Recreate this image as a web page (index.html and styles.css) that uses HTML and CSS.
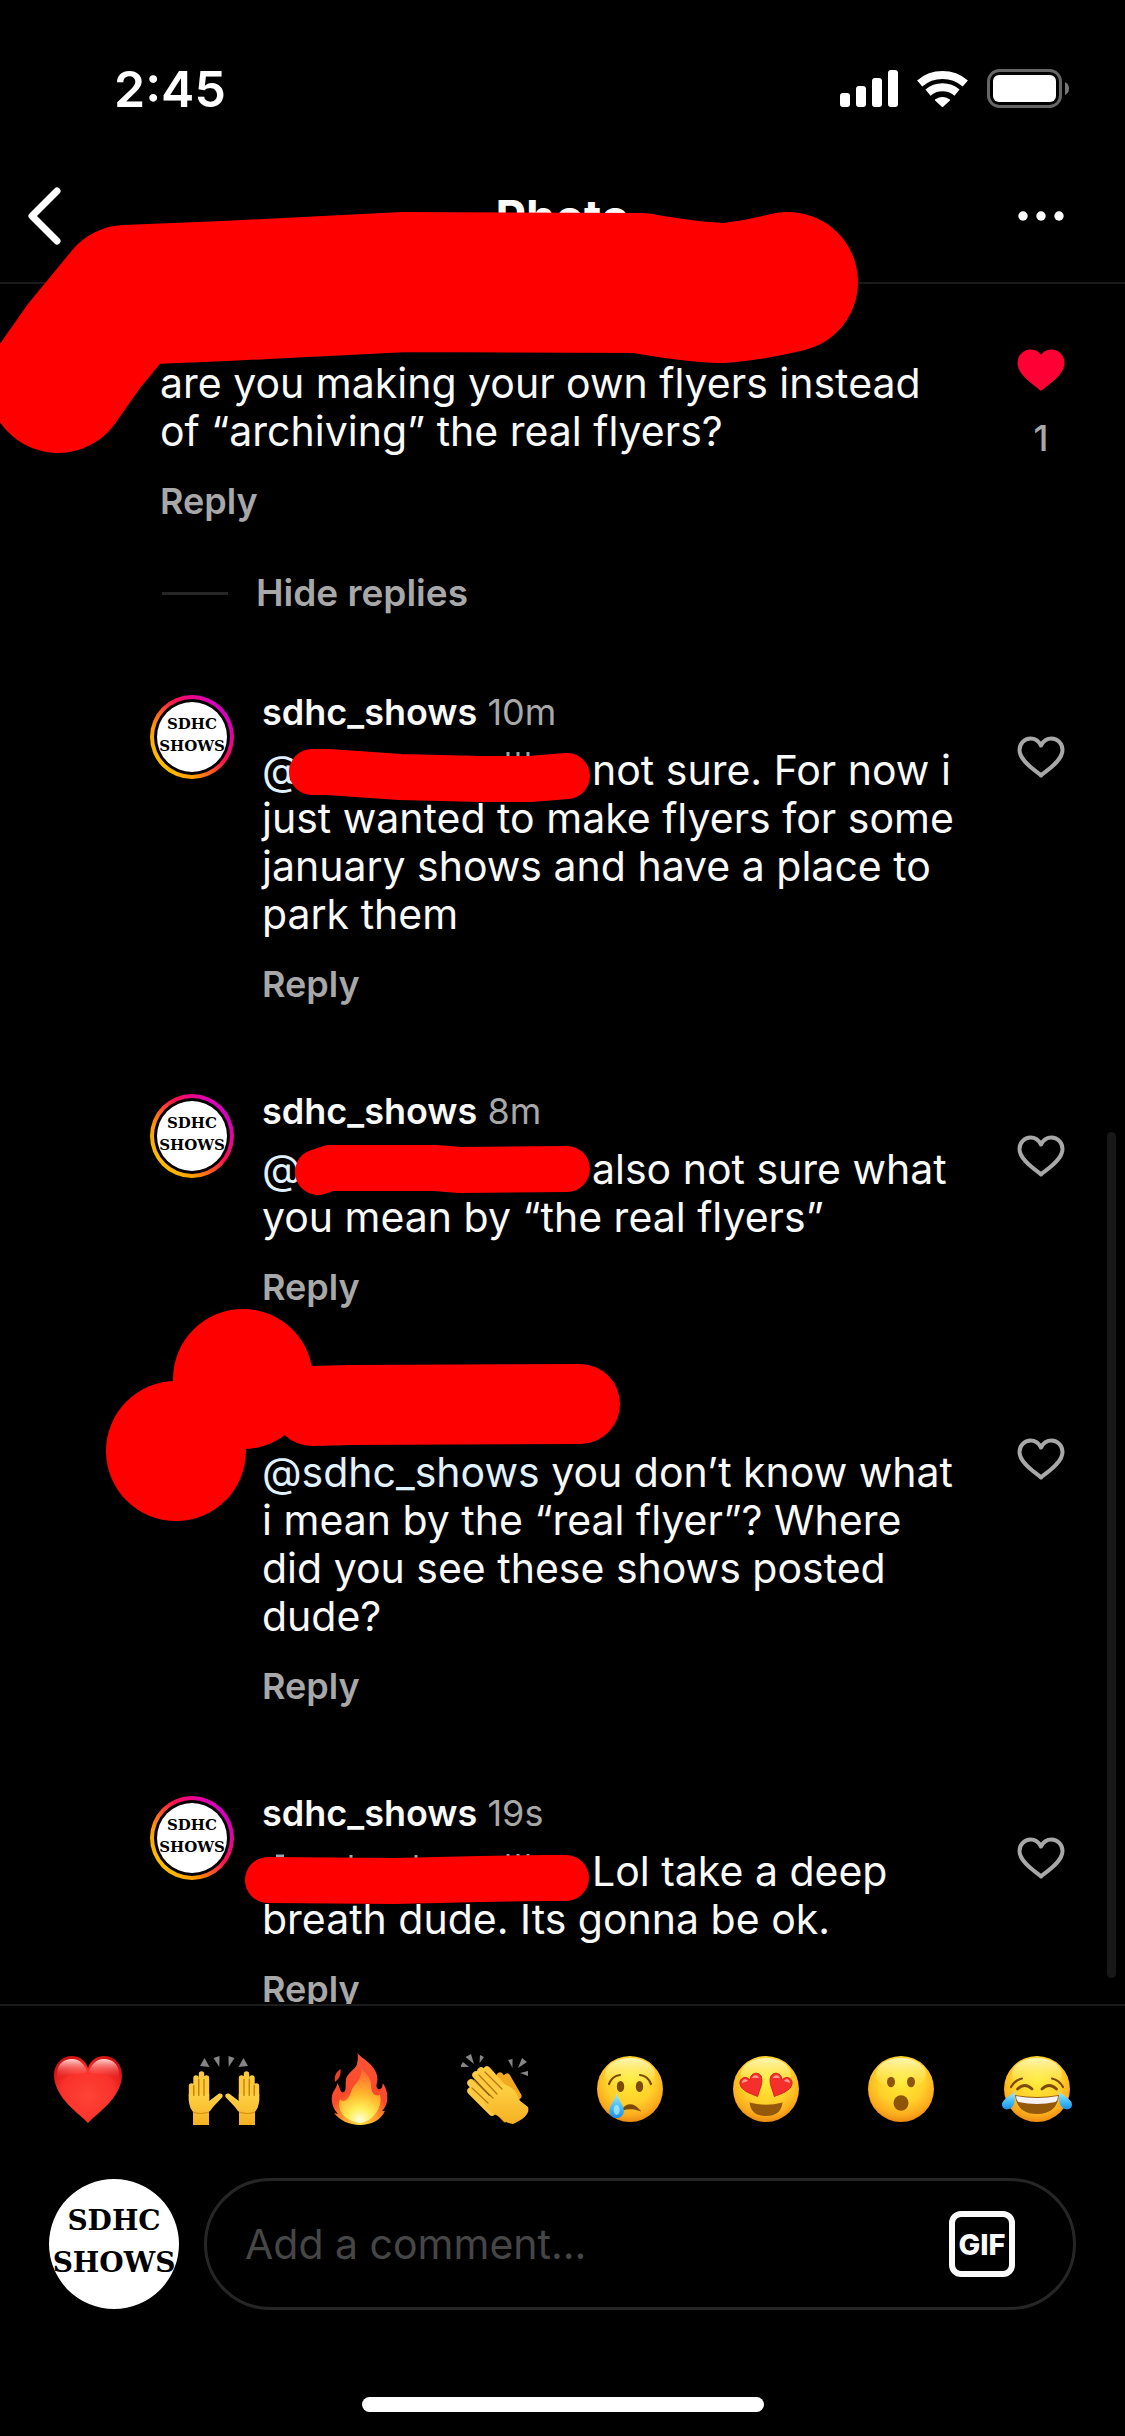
FILE: index.html
```html
<!DOCTYPE html>
<html lang="en">
<head>
    <meta charset="UTF-8">
    <meta name="viewport" content="width=device-width, initial-scale=1.0">
    <title>Photo</title>
    <link rel="stylesheet" href="styles.css">
</head>
<body>

    <!-- shapes shared by several icons -->
    <svg class="defs" aria-hidden="true">
        <defs>
            <radialGradient id="face" cx="50%" cy="36%" r="66%">
                <stop offset="0" stop-color="#ffec35"/>
                <stop offset=".55" stop-color="#ffd02a"/>
                <stop offset=".82" stop-color="#fbab1c"/>
                <stop offset="1" stop-color="#e88410"/>
            </radialGradient>
            <linearGradient id="shine" x1="0" y1="0" x2="0" y2="1">
                <stop offset="0" stop-color="#fff9c4" stop-opacity=".9"/>
                <stop offset="1" stop-color="#fff04a" stop-opacity="0"/>
            </linearGradient>
            <linearGradient id="skin" x1="0" y1="0" x2="0" y2="1">
                <stop offset="0" stop-color="#ffd246"/>
                <stop offset="1" stop-color="#f5b023"/>
            </linearGradient>
            <radialGradient id="red" cx="50%" cy="60%" r="65%">
                <stop offset="0" stop-color="#ff4235"/>
                <stop offset=".6" stop-color="#f9322b"/>
                <stop offset="1" stop-color="#cf0f14"/>
            </radialGradient>
            <linearGradient id="gloss" x1="0" y1="0" x2="0" y2="1">
                <stop offset="0" stop-color="#ffd9d6"/>
                <stop offset="1" stop-color="#ff4a40" stop-opacity="0"/>
            </linearGradient>
            <linearGradient id="tear" x1="0" y1="0" x2="0" y2="1">
                <stop offset="0" stop-color="#a8ecff"/>
                <stop offset=".6" stop-color="#3fb9f7"/>
                <stop offset="1" stop-color="#1a8fe6"/>
            </linearGradient>
            <radialGradient id="flame" gradientUnits="userSpaceOnUse" cx="40" cy="70" r="66">
                <stop offset="0" stop-color="#fffde0"/>
                <stop offset=".18" stop-color="#ffee58"/>
                <stop offset=".4" stop-color="#ffb62c"/>
                <stop offset=".65" stop-color="#ff7a30"/>
                <stop offset="1" stop-color="#f4402a"/>
            </radialGradient>
            <radialGradient id="flame-edge" gradientUnits="userSpaceOnUse" cx="40" cy="74" r="60">
                <stop offset="0" stop-color="#ffe14a"/>
                <stop offset=".3" stop-color="#ff9a2b"/>
                <stop offset=".55" stop-color="#f9492b"/>
                <stop offset="1" stop-color="#fb5134"/>
            </radialGradient>
        </defs>
        <symbol id="heart" viewBox="0 0 48 42">
            <path d="M24 39.500C20 35.500 2.500 25.500 2.500 14C2.500 7.500 7.500 2.500 13.500 2.500C18.500 2.500 22 5.500 24 9.500C26 5.500 29.500 2.500 34.500 2.500C40.500 2.500 45.500 7.500 45.500 14C45.500 25.500 28 35.500 24 39.500Z" stroke-width="4" stroke-linejoin="round"/>
        </symbol>
        <symbol id="face-base" viewBox="0 0 78 78">
            <circle cx="39" cy="39" r="33" fill="url(#face)"/>
            <ellipse cx="39" cy="24" rx="25" ry="16" fill="url(#shine)"/>
        </symbol>
    </svg>

    <header class="top">
        <div class="status-bar">
            <span class="time">2:45</span>
            <div class="status-icons">
                <svg width="58" height="37" viewBox="0 0 58 37" fill="#fff" aria-hidden="true">
                    <rect x="0" y="23" width="10" height="14" rx="3"/>
                    <rect x="16" y="16" width="10" height="21" rx="3"/>
                    <rect x="32" y="8" width="10" height="29" rx="3"/>
                    <rect x="48" y="0" width="10" height="37" rx="3"/>
                </svg>
                <svg width="51" height="37" viewBox="0 0 51 37" fill="none" stroke="#fff" stroke-width="8" aria-hidden="true">
                    <path d="M2.700 13.500A35 35 0 0 1 48.300 13.500"/>
                    <path d="M11 22.600A22.500 22.500 0 0 1 40 22.600"/>
                    <path d="M19 30A12 12 0 0 1 32 30L25.500 36Z" fill="#fff" stroke-width="2" stroke-linejoin="round"/>
                </svg>
                <svg width="82" height="39" viewBox="0 0 82 39" aria-hidden="true">
                    <rect x="1.500" y="1.500" width="72" height="36" rx="11" fill="none" stroke="#666" stroke-width="3"/>
                    <rect x="6" y="6" width="63" height="27" rx="6" fill="#fff"/>
                    <path d="M78 13Q82 15 82 19.500Q82 24 78 26Z" fill="#777"/>
                </svg>
            </div>
        </div>
        <nav class="nav-bar">
            <button class="nav-button" aria-label="Back">
                <svg width="34" height="58" viewBox="0 0 34 58" fill="none" stroke="#fff" stroke-width="7" stroke-linecap="round" stroke-linejoin="round">
                    <path d="M29 4L4 29L29 54"/>
                </svg>
            </button>
            <h1 class="title">Photo</h1>
            <button class="nav-button more" aria-label="More options">
                <svg width="46" height="10" viewBox="0 0 46 10" fill="#fff">
                    <circle cx="5" cy="5" r="4.700"/>
                    <circle cx="23" cy="5" r="4.700"/>
                    <circle cx="41" cy="5" r="4.700"/>
                </svg>
            </button>
        </nav>
        <svg class="scribble wide" width="860" height="460" aria-hidden="true">
            <path d="M58 383L84 346L126 295L225 291L405 282L640 283Q690 292 722 293Q745 292 788 282"/>
        </svg>
    </header>

    <main class="comments">
        <article class="comment">
            <div class="comment-body">
                <div class="comment-head"></div>
                <p class="comment-text">are you making your own flyers instead of “archiving” the real flyers?</p>
                <button class="reply-button">Reply</button>
            </div>
            <div class="likes">
                <button class="like-button liked" aria-label="Unlike"><svg class="heart"><use href="#heart"/></svg></button>
                <span class="like-count">1</span>
            </div>
        </article>

        <button class="hide-replies">Hide replies</button>

        <article class="comment reply">
            <div class="avatar-ring"><div class="avatar"><span>SDHC</span><span>SHOWS</span></div></div>
            <div class="comment-body">
                <div class="comment-head"><a href="#" class="username">sdhc_shows</a> <span class="age">10m</span></div>
                <p class="comment-text"><a href="#" class="mention covered">@</a>not sure. For now i just wanted to make flyers for some january shows and have a place to park them</p>
                <button class="reply-button">Reply</button>
            </div>
            <div class="likes">
                <button class="like-button" aria-label="Like"><svg class="heart"><use href="#heart"/></svg></button>
            </div>
            <svg class="scribble" width="600" height="130" aria-hidden="true">
                <path class="letter-tops" d="M508 64V70M518 64V70M528 64V70"/>
                <path d="M312 84L328 84L400 89L480 91L530 91L567 88"/>
            </svg>
        </article>

        <article class="comment reply">
            <div class="avatar-ring"><div class="avatar"><span>SDHC</span><span>SHOWS</span></div></div>
            <div class="comment-body">
                <div class="comment-head"><a href="#" class="username">sdhc_shows</a> <span class="age">8m</span></div>
                <p class="comment-text"><a href="#" class="mention covered">@</a>also not sure what you mean by “the real flyers”</p>
                <button class="reply-button">Reply</button>
            </div>
            <div class="likes">
                <button class="like-button" aria-label="Like"><svg class="heart"><use href="#heart"/></svg></button>
            </div>
            <svg class="scribble" width="600" height="130" aria-hidden="true">
                <path d="M318 85L330 81L435 81L460 83L567 82"/>
            </svg>
        </article>

        <article class="comment reply">
            <div class="avatar-ring empty"></div>
            <div class="comment-body">
                <div class="comment-head"></div>
                <p class="comment-text"><a href="#" class="mention">@sdhc_shows</a> you don’t know what i mean by the “real flyer”? Where did you see these shows posted dude?</p>
                <button class="reply-button">Reply</button>
            </div>
            <div class="likes">
                <button class="like-button" aria-label="Like"><svg class="heart"><use href="#heart"/></svg></button>
            </div>
            <svg class="scribble" width="640" height="140" aria-hidden="true">
                <path class="medium" d="M312 16L350 15L580 14"/>
                <circle cx="176" cy="61" r="70"/>
                <circle cx="243" cy="-11" r="70"/>
            </svg>
        </article>

        <article class="comment reply">
            <div class="avatar-ring"><div class="avatar"><span>SDHC</span><span>SHOWS</span></div></div>
            <div class="comment-body">
                <div class="comment-head"><a href="#" class="username">sdhc_shows</a> <span class="age">19s</span></div>
                <p class="comment-text"><a href="#" class="mention covered"></a>Lol take a deep breath dude. Its gonna be ok.</p>
                <button class="reply-button">Reply</button>
            </div>
            <div class="likes">
                <button class="like-button" aria-label="Like"><svg class="heart"><use href="#heart"/></svg></button>
            </div>
            <svg class="scribble" width="600" height="130" aria-hidden="true">
                <path class="letter-tops" d="M276 67H284M351 66V70M416 66V70M508 65V70M518 65V70M528 65V70"/>
                <path d="M268 91L395 92L480 90L545 89L566 89"/>
            </svg>
        </article>
        <div class="scroll-thumb"></div>
    </main>

    <footer class="composer">
        <div class="emoji-row">
            <button class="emoji" aria-label="Red heart">
                <svg viewBox="0 0 78 78">
                    <path d="M39 73C32 65 5 48 5 25C5 14 13 6 23 6C31 6 37 11 39 18C41 11 47 6 55 6C65 6 73 14 73 25C73 48 46 65 39 73Z" fill="url(#red)"/>
                    <path d="M8 24C8 14 15 9 23 9C31 9 36 15 38 22C30 26 18 22 8 28ZM40 22C42 15 47 9 55 9C63 9 70 14 70 24V28C60 22 48 26 40 22Z" fill="url(#gloss)"/>
                </svg>
            </button>
            <button class="emoji" aria-label="Raising hands">
                <svg viewBox="0 0 78 78">
                    <g id="raised-hand">
                        <path d="M15 16L19.500 8L24.500 17ZM28.500 8L34.500 6L34.300 17Z" fill="#858585"/>
                        <path d="M6.500 36V50M11 28V48M16.500 24V48M21.500 28V50" stroke="#ffc93c" stroke-width="5.400" stroke-linecap="round"/>
                        <path d="M3.800 44H24.200V51L34 43.500Q38.500 43 37.500 47L28 57Q25.500 61 24 62V75H8V62Q4 57 3.800 50Z" fill="url(#skin)"/>
                        <path d="M8.800 35V46M13.800 29V46M19 29V46" stroke="#b97708" stroke-width="1.200"/>
                        <path d="M8 62Q15 65 24 62" fill="none" stroke="#d8920f" stroke-width="1.200"/>
                    </g>
                    <use href="#raised-hand" transform="matrix(-1 0 0 1 78 0)"/>
                </svg>
            </button>
            <button class="emoji" aria-label="Fire">
                <svg viewBox="0 0 78 78">
                    <path d="M37.500 3C42 9 57 15 57.500 29C57.500 32 55 37 58 39C61 40 63 37 62.500 33C67 38 68 46 67 52C66 56 64 59 62 61L65 61C61 70 51 75 40 75C29 75 19 70 14 63L18 64C13 59 11 52 12 46C13 40 17 38 17.300 33C20 37 20 42 22.500 42.500C27 42 25 36 26 29C28 22 36 19 37 14C38 10 38 6 37.500 3Z" fill="url(#flame-edge)"/>
                    <path d="M20.500 19C21 24 20 28 15 32C14 26 16 22 20.500 19Z" fill="#e8412a"/>
                    <path d="M41 17C45 24 51 26 51 35C51 42 54 47 60 45C63 55 55 71 40 73C25 71 16 60 20 49C24 54 29 49 31 42C33 34 43 31 41 17Z" fill="url(#flame)"/>
                </svg>
            </button>
            <button class="emoji" aria-label="Clapping hands">
                <svg viewBox="0 0 78 78">
                    <path d="M5 15L7 12L13 17L5 17ZM9.500 7L15 4L18 14ZM24 5L28 7L23.500 13ZM52 10L56.500 9L56.500 18ZM66 8L71 12L62 18ZM64 23L72 21L72 26Z" fill="#858585"/>
                    <path d="M44 26L60 50M51 27L62 46" stroke="#f0a920" stroke-width="7" stroke-linecap="round"/>
                    <path d="M40 62L49 71L53 68" fill="#eda41c" stroke="#eda41c" stroke-width="3" stroke-linejoin="round"/>
                    <path d="M15 41L36 62M15 33L40 58M20 25L44 50M25 21L47 46M31 20L52 44" stroke="#ffca40" stroke-width="7.500" stroke-linecap="round"/>
                    <path d="M28 50L48 34Q61 39 63 50L72 57Q75 66 57 74Q49 73 45 67Q36 65 28 54Z" fill="url(#skin)"/>
                    <path d="M16 38L32 53M18 30L37 48M23 25L41 44M29 22L46 39" stroke="#b97708" stroke-width="1.200" stroke-linecap="round"/>
                </svg>
            </button>
            <button class="emoji" aria-label="Crying face">
                <svg viewBox="0 0 78 78">
                    <use href="#face-base"/>
                    <path d="M18 34Q21 26 29 25M49 25Q57 26 60 34" fill="none" stroke="#7d4a05" stroke-width="2.200" stroke-linecap="round"/>
                    <ellipse cx="29.500" cy="36.500" rx="3.700" ry="5.500" fill="#7d4a05"/>
                    <ellipse cx="48.500" cy="36.500" rx="3.700" ry="5.500" fill="#7d4a05"/>
                    <path d="M31 60Q39 50 48 60Q39 57 31 60Z" fill="#7d4a05" stroke="#7d4a05" stroke-width="1.500"/>
                    <path d="M25.700 43C27 50 33 55 33 61.500A7.400 7.400 0 0 1 18.300 61.500C18.300 55 24.500 50 25.700 43Z" fill="url(#tear)"/>
                    <ellipse cx="25.700" cy="60" rx="3" ry="5" fill="#b9f1ff" opacity=".7"/>
                </svg>
            </button>
            <button class="emoji" aria-label="Heart eyes">
                <svg viewBox="0 0 78 78">
                    <use href="#face-base"/>
                    <g id="heart-eye">
                        <path d="M30.700 46.500C25 44 14 41 13 34C12 28 19 25 23 30C23 23 31 21 34 26C37 32 32 40 30.700 46.500Z" fill="#f5302c" stroke="#d8221c" stroke-width="1"/>
                        <path d="M15 33C15 29 19 28 21 31ZM25 28C27 24 31 25 32 28Z" fill="#ff9d94"/>
                    </g>
                    <use href="#heart-eye" transform="matrix(-1 0 0 1 78 0)"/>
                    <path d="M22.500 52.500Q39 57 55.500 52.500Q54 66 39 66Q24 66 22.500 52.500Z" fill="#94590a"/>
                </svg>
            </button>
            <button class="emoji" aria-label="Surprised face">
                <svg viewBox="0 0 78 78">
                    <use href="#face-base"/>
                    <ellipse cx="29" cy="32" rx="4" ry="5.200" fill="#8f5507"/>
                    <ellipse cx="49" cy="32" rx="4" ry="5.200" fill="#8f5507"/>
                    <ellipse cx="39" cy="53" rx="7.500" ry="7.800" fill="#8f5507"/>
                </svg>
            </button>
            <button class="emoji" aria-label="Tears of joy">
                <svg viewBox="0 0 78 78">
                    <use href="#face-base"/>
                    <path d="M13 37Q17 30 24 28.500M65 37Q61 30 54 28.500" fill="none" stroke="#7d4a05" stroke-width="2.200" stroke-linecap="round"/>
                    <path d="M19.500 39Q27 32 34 39M44 39Q51 32 58.500 39" fill="none" stroke="#7d4a05" stroke-width="2.800" stroke-linecap="round"/>
                    <path d="M17 45Q39 49 61 45Q59 64 39 64Q19 64 17 45Z" fill="#94590a"/>
                    <path d="M18 46Q39 50 60 46Q60 50 57.500 52Q39 56 20.500 52Q18 50 18 46Z" fill="#f4f2f5"/>
                    <path id="joy-tear" d="M16.500 41.500C17 48 18 54 13 58C9 61 4 59 4 54.500C4 49 12 47 16.500 41.500Z" fill="url(#tear)"/>
                    <use href="#joy-tear" transform="matrix(-1 0 0 1 78 0)"/>
                </svg>
            </button>
        </div>

        <form class="comment-form">
            <div class="avatar large"><span>SDHC</span><span>SHOWS</span></div>
            <div class="input-box">
                <input type="text" class="comment-input" placeholder="Add a comment..." aria-label="Add a comment">
                <button type="button" class="gif-button">GIF</button>
            </div>
        </form>
        <div class="home-indicator"></div>
    </footer>

</body>
</html>
```
FILE: styles.css
```css
* {
    box-sizing: border-box;
}

body {
    margin: 0;
    height: 100vh;
    display: flex;
    flex-direction: column;
    background-color: #000;
    color: #fafafa;
    font-family: 'Inter', 'Liberation Sans', sans-serif;
    overflow: hidden;
}

button {
    padding: 0;
    border: none;
    background: none;
    color: inherit;
    font-family: inherit;
    cursor: pointer;
}

a {
    color: inherit;
    text-decoration: none;
}

svg {
    display: block;
}

.defs {
    position: absolute;
    width: 0;
    height: 0;
}

/* status bar and title */
.top {
    position: relative;
    z-index: 2;
    border-bottom: 2px solid #1c1c1c;
}

.status-bar {
    display: flex;
    justify-content: space-between;
    align-items: center;
    height: 150px;
    padding: 27px 56px 0 114px;
}

.time {
    font-size: 50px;
    font-weight: 600;
    color: #fff;
}

.status-icons {
    display: flex;
    align-items: center;
    gap: 19px;
}

.nav-bar {
    display: grid;
    grid-template-columns: 1fr auto 1fr;
    align-items: center;
    height: 132px;
    padding: 0 28px;
}

.nav-button {
    width: 46px;
}

.nav-button.more {
    justify-self: end;
    margin-right: 33px;
}

.title {
    margin: 0;
    font-size: 47px;
    font-weight: 700;
}

/* marker strokes drawn over names */
.scribble {
    position: absolute;
    top: 0;
    left: 0;
    overflow: visible;
    pointer-events: none;
    fill: #ff0000;
}

.scribble path {
    fill: none;
    stroke: #ff0000;
    stroke-width: 46px;
    stroke-linecap: round;
    stroke-linejoin: round;
}

.scribble.wide path {
    stroke-width: 140px;
}

.scribble path.medium {
    stroke-width: 80px;
}

.scribble path.letter-tops {
    stroke: #9aa5ad;
    stroke-width: 3px;
    stroke-linecap: butt;
}

/* comments */
.comments {
    position: relative;
    flex: 1;
    min-height: 0;
    padding-top: 17px;
    overflow: hidden;
}

.comment {
    position: relative;
    display: flex;
    align-items: flex-start;
    padding: 0 60px 0 160px;
}

.comment.reply {
    padding-left: 150px;
    margin-bottom: 79px;
}

.comment-body {
    flex: 1;
    min-width: 0;
}

.comment-head {
    height: 48px;
    margin-bottom: 10px;
    font-size: 36px;
    line-height: 48px;
    color: #a8a8a8;
}

.username {
    color: #fafafa;
    font-weight: 600;
}

.comment-text {
    margin: 0 0 22px;
    font-size: 41px;
    line-height: 48px;
}

.mention {
    color: #e0f1ff;
}

.mention.covered {
    display: inline-block;
    width: 330px;
}

.reply-button,
.hide-replies {
    display: block;
    font-size: 36px;
    font-weight: 600;
    line-height: 48px;
    color: #a8a8a8;
}

.hide-replies {
    display: flex;
    align-items: center;
    gap: 28px;
    margin: 44px 0 71px 162px;
    font-size: 37px;
}

.hide-replies::before {
    content: "";
    width: 66px;
    height: 3px;
    background-color: #262626;
}

.likes {
    display: flex;
    flex-direction: column;
    align-items: center;
    width: 48px;
    margin: 48px 0 0 56px;
}

.heart {
    width: 48px;
    height: 42px;
    fill: none;
    stroke: #a8a8a8;
}

.liked .heart {
    fill: #ff0034;
    stroke: #ff0034;
}

.like-count {
    margin-top: 23px;
    font-size: 36px;
    font-weight: 500;
    line-height: 48px;
    color: #a8a8a8;
}

.avatar-ring {
    display: flex;
    align-items: center;
    justify-content: center;
    width: 84px;
    height: 84px;
    margin: 7px 28px 0 0;
    border: 4px solid transparent;
    border-radius: 50%;
    background: linear-gradient(#000, #000) padding-box,
        linear-gradient(50deg, #ffd600 5%, #ff9a00 30%, #ff1050 58%, #d300c5 85%) border-box;
}

.avatar-ring.empty {
    background: none;
}

.avatar {
    display: flex;
    flex-direction: column;
    align-items: center;
    justify-content: center;
    flex: none;
    width: 70px;
    height: 70px;
    padding-bottom: 4px;
    border-radius: 50%;
    background-color: #fff;
    color: #000;
    font-family: 'DejaVu Serif', serif;
    font-size: 15px;
    font-weight: 700;
    line-height: 22px;
    overflow: hidden;
}

.avatar.large {
    width: 130px;
    height: 130px;
    font-size: 28px;
    line-height: 42px;
}

.scroll-thumb {
    position: absolute;
    right: 9px;
    bottom: 26px;
    width: 9px;
    height: 846px;
    border-radius: 5px;
    background-color: #181818;
}

/* bottom bar */
.composer {
    padding: 44px 49px 24px;
    border-top: 2px solid #1c1c1c;
    background-color: #000;
}

.emoji-row {
    display: flex;
    justify-content: space-between;
}

.emoji {
    width: 78px;
    height: 78px;
}

.comment-form {
    display: flex;
    align-items: center;
    gap: 25px;
    margin: 50px 0 87px;
}

.input-box {
    display: flex;
    align-items: center;
    flex: 1;
    height: 132px;
    padding: 0 58px 0 38px;
    border: 3px solid #262626;
    border-radius: 66px;
}

.comment-input {
    flex: 1;
    min-width: 0;
    padding: 0;
    border: none;
    outline: none;
    background: none;
    color: #fafafa;
    font-family: inherit;
    font-size: 41px;
}

.comment-input::placeholder {
    color: #464646;
    opacity: 1;
}

.gif-button {
    width: 66px;
    height: 66px;
    border: 6px solid #fafafa;
    border-radius: 12px;
    font-size: 29px;
    font-weight: 800;
}

.home-indicator {
    width: 402px;
    height: 15px;
    margin: 0 auto;
    border-radius: 8px;
    background-color: #fff;
}
```
